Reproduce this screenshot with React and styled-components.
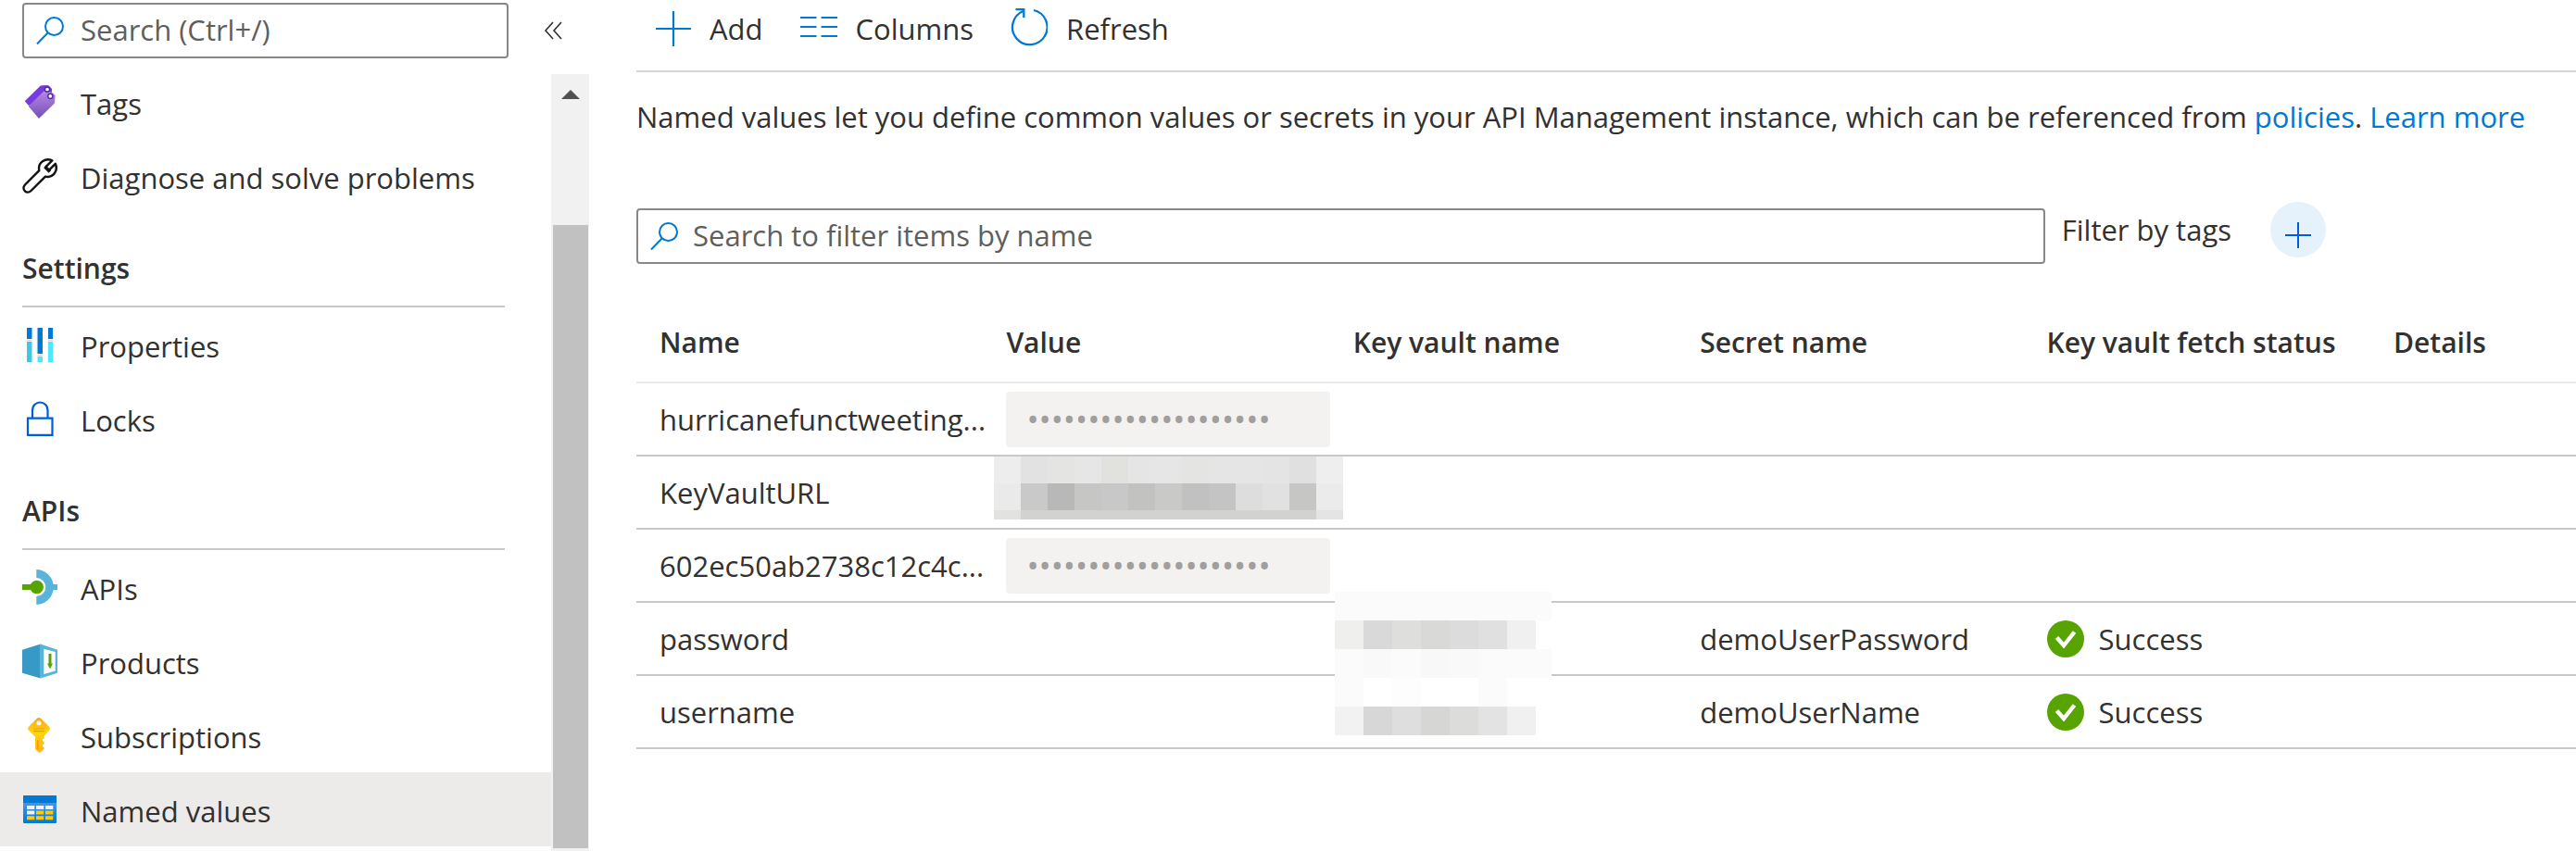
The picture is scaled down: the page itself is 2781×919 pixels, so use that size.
import React from "react";
import styled, { createGlobalStyle } from "styled-components";

const ink = "#323130";
const blue = "#0078d4";
const line = "#c8c8c8";

const GlobalStyle = createGlobalStyle`
  *, *::before, *::after { box-sizing: border-box; }
  body {
    margin: 0;
    background: #fff;
    color: ${ink};
    font-family: "Open Sans", "Noto Sans", sans-serif;
    font-size: 31px;
    line-height: 42px;
  }
  button, input { font: inherit; color: inherit; }
  svg { display: block; flex: none; }
`;

const Page = styled.div`
  display: flex;
  min-height: 100vh;
`;

/* Side navigation */

const Sidebar = styled.aside`
  display: flex;
  flex-direction: column;
  flex: none;
  width: 636px;
`;

const SidebarHeader = styled.div`
  display: flex;
  align-items: center;
  gap: 24px;
  padding: 3px 15px 7px 24px;
`;

const SearchBox = styled.label`
  display: flex;
  align-items: center;
  gap: ${(p) => p.$gap}px;
  flex: 1;
  min-width: 0;
  height: 60px;
  padding: 0 13px;
  border: 2px solid #8a8886;
  border-radius: 4px;
`;

const SearchInput = styled.input`
  flex: 1;
  min-width: 0;
  padding: 0 0 2px;
  border: 0;
  outline: 0;
  background: transparent;
  &::placeholder { color: #605e5c; opacity: 1; }
`;

const CollapseButton = styled.button`
  display: flex;
  align-items: center;
  justify-content: center;
  width: 48px;
  height: 60px;
  padding: 0;
  border: 0;
  background: none;
`;

const SidebarBody = styled.div`
  display: flex;
  flex: 1;
`;

const Nav = styled.nav`
  flex: 1;
`;

const NavHeading = styled.h2`
  margin: 0 50px 0 24px;
  padding-top: 20px;
  border-bottom: 2px solid ${line};
  font-size: 30px;
  font-weight: 600;
  line-height: 80px;
`;

const NavItem = styled.a`
  display: flex;
  align-items: center;
  gap: 25px;
  height: 80px;
  padding-left: 24px;
  background: ${(p) => (p.$active ? "#edebe9" : "transparent")};
  color: inherit;
  text-decoration: none;
`;

const NavLabel = styled.span`
  padding-top: 4px;
`;

const ScrollTrack = styled.div`
  display: flex;
  flex-direction: column;
  width: 41px;
  margin-top: 10px;
  padding: 0 1px 3px 2px;
  background: #f1f1f1;
`;

const ScrollArrow = styled.div`
  display: flex;
  align-items: center;
  justify-content: center;
  height: 44px;
`;

const ScrollThumb = styled.div`
  flex: 1;
  margin-top: 119px;
  background: #c1c1c1;
`;

/* Main content */

const Main = styled.main`
  flex: 1;
  min-width: 0;
  padding-left: 51px;
`;

const Toolbar = styled.div`
  display: flex;
  gap: 40px;
  height: 78px;
  padding: 0 0 14px 21px;
  border-bottom: 2px solid #d6d6d6;
`;

const ToolButton = styled.button`
  display: flex;
  align-items: center;
  gap: 20px;
  padding: 0;
  border: 0;
  background: none;
`;

const Intro = styled.p`
  margin: 27px 0 71px;
`;

const Link = styled.a`
  color: ${blue};
  text-decoration: none;
`;

const FilterRow = styled.div`
  display: flex;
  align-items: flex-start;
  padding-right: 270px;
`;

const FilterField = styled.div`
  display: flex;
  flex: 1;
  padding-top: 7px;
`;

const FilterLabel = styled.span`
  margin: 0 42px 0 18px;
  line-height: 60px;
`;

const AddTagButton = styled.button`
  display: flex;
  align-items: center;
  justify-content: center;
  width: 60px;
  height: 60px;
  padding: 12px 0 0;
  border: 0;
  border-radius: 50%;
  background: #e5f1fb;
`;

const Table = styled.table`
  width: 100%;
  margin-top: 43px;
  border-collapse: separate;
  border-spacing: 0;
  table-layout: fixed;
`;

const HeadCell = styled.th`
  width: ${(p) => (p.$last ? "222px" : "auto")};
  height: 86px;
  padding: 0 0 0 25px;
  border-bottom: 2px solid #eaeaea;
  font-size: 30px;
  font-weight: 600;
  text-align: left;
  white-space: nowrap;
`;

const Cell = styled.td`
  position: relative;
  height: 79px;
  padding: 0 0 0 ${(p) => (p.$flush ? 12 : 25)}px;
  border-bottom: 2px solid ${line};
  vertical-align: ${(p) => (p.$flush ? "top" : "middle")};
  white-space: nowrap;
`;

const Secret = styled.input`
  display: block;
  width: 350px;
  max-width: 100%;
  height: 60px;
  padding: 0 22px;
  border: 0;
  border-radius: 4px;
  background: #f3f2f1;
  color: #a19f9d;
  font-size: 35px;
`;

const Status = styled.span`
  display: flex;
  align-items: center;
  gap: 16px;
`;

const ValueMask = styled.div`
  display: grid;
  grid-template-columns: repeat(13, 29px);
  grid-template-rows: 29px 29px 10px;
`;

/* Covers the vault names of two rows, and the border between them */
const VaultMask = styled.div`
  position: absolute;
  z-index: 1;
  top: -12px;
  left: 5px;
  display: grid;
  grid-template-columns: repeat(7, 31px) 17px;
  grid-auto-rows: 31px;
`;

const MaskTile = styled.span`
  background: ${(p) => p.$tone};
`;

/* Icons */

const Icon = ({ size = 38, h = size, box = `0 0 ${size} ${h}`, children }) => (
  <svg width={size} height={h} viewBox={box} fill="none" aria-hidden="true">
    {children}
  </svg>
);

const SearchIcon = () => (
  <Icon size={30}>
    <g stroke={blue} strokeWidth="2">
      <circle cx="19.5" cy="10.5" r="9.5" />
      <path d="M12.8 17.2L1 29.5" />
    </g>
  </Icon>
);

const CollapseIcon = () => (
  <Icon size={20}>
    <path d="M10 1L2 10L10 19M19 1L11 10L19 19" stroke={ink} strokeWidth="1.6" />
  </Icon>
);

const TagsIcon = () => (
  <Icon>
    <defs>
      <linearGradient id="tag" x1="0" y1="0" x2="0" y2="1">
        <stop offset="0" stopColor="#b987e6" />
        <stop offset="1" stopColor="#7350b5" />
      </linearGradient>
    </defs>
    <path d="M2.7 18.3L19 2.2Q20 1.2 21.5 1.2L27 1Q28.300 1 29.200 2L32 5V12L7 23Z" fill="#773adc" />
    <path d="M6.700 23.700L23.500 7.200Q24.500 6.300 26 6.500L32.500 9L35.700 12L35 19.500Q35 20.500 34.200 21.200L18 37Z" fill="url(#tag)" />
    <circle cx="27" cy="5.500" r="2.600" fill="#fff" stroke="#4f2a9a" strokeWidth="1.500" />
    <circle cx="30.300" cy="12.800" r="2.600" fill="#fff" stroke="#552f99" strokeWidth="1.500" />
  </Icon>
);

const WrenchIcon = () => (
  <Icon>
    <path
      d="M32.300 2.300C25 -.800 16.500 4.500 18.300 13.200L3 28.500C-1.500 33.500 5 39.500 9.500 35L25 19.600C33.500 21.500 39 13.500 35.800 5.800L29 12.600L25.500 9.200Z"
      stroke="#111"
      strokeWidth="2.400"
      strokeLinejoin="round"
    />
    <path d="M26.500 8.200L24.600 10.200L28.600 14.200L30.500 12.200" stroke="#111" strokeWidth="2" />
  </Icon>
);

const PropertiesIcon = () => (
  <Icon>
    <path d="M5 1h5.500v12H5zM16.500 1H22v28h-5.500zM28 1h5v12h-5z" fill={blue} />
    <path d="M5 16h5.500v22H5z" fill="#3cc8e6" />
    <path d="M16.500 32H22v6h-5.500zM28 16h5v22h-5z" fill="#50e6ff" />
    <path d="M5 13.500h5.500v2H5zM16.500 29.500H22v2h-5.500zM28 13.500h5v2h-5z" fill="#d9d9d9" />
  </Icon>
);

const LockIcon = () => (
  <Icon>
    <g stroke="#015cda" strokeWidth="2.200">
      <path d="M6 18.600h26.500v18.300H6z" />
      <path d="M11 18V10.500C11 -1.500 27.500 -1.500 27.500 10.500V18" />
    </g>
  </Icon>
);

const ApiIcon = () => (
  <Icon>
    <path d="M15.300 0A19 18.900 0 0 1 33.600 16H38v6h-4.400A19 18.900 0 0 1 15.300 38V29A10 10 0 0 0 15.300 9Z" fill="#59b4d9" />
    <path d="M0 16h9a7.300 7.300 0 1 1 0 6H0z" fill="#57a300" />
  </Icon>
);

const ProductIcon = () => (
  <Icon>
    <path d="M19.700 .5L38 6.700V31.700L19.700 37.500Z" fill="#59b4d9" />
    <path d="M0 6.700L19.700 .5V37.500L0 31.700Z" fill="#3999c6" />
    <path d="M23.300 5.700L35.700 9V29.500L23.300 33Z" fill="#fff" />
    <path d="M28.500 11h3v10.500H33L30 27.500L27 21.500H28.500Z" fill="#57a300" />
  </Icon>
);

const KeyIcon = () => (
  <Icon>
    <defs>
      <linearGradient id="key" x1="0" y1="0" x2="0" y2="1">
        <stop offset="0" stopColor="#fea11b" />
        <stop offset=".4" stopColor="#ffd70f" />
        <stop offset="1" stopColor="#feb21b" />
      </linearGradient>
    </defs>
    <path
      d="M15.500 1.200Q18 -1 20.500 1.200L29 9.700Q31 12 29 14.200L23.600 20V23H22v2.500h1.600V29H22v2.500h1.600V34L18.500 38L14 34V20.500L7 13.900Q5 12 7 9.700Z"
      fill="url(#key)"
    />
    <circle cx="18" cy="5.700" r="2.500" fill="#fff" />
    <path d="M12 12h12M12 14.700h12M16.700 24v10" stroke="#ff9300" strokeWidth="1.200" />
  </Icon>
);

const TableIcon = () => (
  <Icon>
    <defs>
      <linearGradient id="grid" x1="0" y1="0" x2="0" y2="1">
        <stop offset="0" stopColor="#5ea0ef" />
        <stop offset="1" stopColor={blue} />
      </linearGradient>
    </defs>
    <rect x="1" y="4" width="36" height="30" rx="1" fill="url(#grid)" />
    <path d="M1 5q0-1 1-1h34q1 0 1 1v7H1z" fill={blue} />
    <path d="M5 15h8.300v4H5zM15 15h8.300v4H15zM25 15h8.300v4H25zM5 20.600h8.300v4H5z" fill="#f2f2f2" />
    <path d="M15 20.600h8.300v4H15zM25 20.600h8.300v4H25zM5 26.200h8.300v4H5zM15 26.200h8.300v4H15zM25 26.200h8.300v4H25z" fill="#ffca00" />
  </Icon>
);

const AddIcon = () => (
  <Icon>
    <path d="M19 0v38M0 19h38" stroke={blue} strokeWidth="2.200" />
  </Icon>
);

const ColumnsIcon = () => (
  <Icon size={40}>
    <path d="M0 8h17.500M22.500 8H40M0 18h17.500M22.500 18H40M0 28h17.500M22.500 28H40" stroke={blue} strokeWidth="2.200" />
  </Icon>
);

const RefreshIcon = () => (
  <Icon size={40} h={44}>
    <g stroke={blue} strokeWidth="2.300">
      <path d="M25 2A18.800 18.800 0 1 1 13.500 3" />
      <path d="M5.500 1.200H14.300V10" />
    </g>
  </Icon>
);

const TagPlusIcon = () => (
  <Icon size={28}>
    <path d="M14 0v28M0 14h28" stroke="#015cda" strokeWidth="2" />
  </Icon>
);

const SuccessIcon = () => (
  <Icon size={40}>
    <circle cx="20" cy="20" r="20" fill="#57a300" />
    <path d="M10.500 18.500L18 27L29.500 12.500" stroke="#fff" strokeWidth="4.400" />
  </Icon>
);

/* Data */

const generalItems = [
  { label: "Tags", Glyph: TagsIcon },
  { label: "Diagnose and solve problems", Glyph: WrenchIcon },
];

const settingsItems = [
  { label: "Properties", Glyph: PropertiesIcon },
  { label: "Locks", Glyph: LockIcon },
];

const apiItems = [
  { label: "APIs", Glyph: ApiIcon },
  { label: "Products", Glyph: ProductIcon },
  { label: "Subscriptions", Glyph: KeyIcon },
  { label: "Named values", Glyph: TableIcon, active: true },
];

const columns = ["Name", "Value", "Key vault name", "Secret name", "Key vault fetch status", "Details"];

const rows = [
  { name: "hurricanefunctweeting...", value: "secret" },
  { name: "KeyVaultURL", value: "masked" },
  { name: "602ec50ab2738c12c4c...", value: "secret" },
  { name: "password", vault: true, secretName: "demoUserPassword", status: "Success" },
  { name: "username", secretName: "demoUserName", status: "Success" },
];

const valueTones = [
  "#ededed", "#e2e2e2", "#e4e4e2", "#e6e6e6", "#e1e1de", "#e5e5e5", "#e6e6e6", "#e4e4e2", "#e5e5e5", "#e5e5e5", "#e4e4e4", "#e0e0e0", "#eeeeee",
  "#eaeaea", "#c9c9c9", "#b8b8b8", "#c6c6c4", "#c8c8c8", "#c2c2c0", "#c9c9c7", "#c1c1c1", "#c4c4c4", "#dddddd", "#e1e1e1", "#c6c6c4", "#ebebeb",
  "#e2e2e1", ...Array(11).fill("#d2d2d0"), "#e4e4e4",
];

const vaultTones = [
  ...Array(8).fill("#fbfbfb"),
  "#efefed", "#d9d9d9", "#dededc", "#d9d9d7", "#dcdcdc", "#e0e0e0", "#f0f0f0", "#ffffff",
  "#fbfbfb", "#f9f9f9", "#fbfbfb", "#f8f8f8", "#f9f9f9", "#fbfbfb", "#fbfbfb", "#fbfbfb",
  "#fbfbfb", "#ffffff", "#fdfdfd", "#ffffff", "#ffffff", "#fbfbfb", "#ffffff", "#ffffff",
  "#f2f2f2", "#d7d7d7", "#dedede", "#d6d6d4", "#dcdcda", "#e3e3e3", "#f0f0f0", "#ffffff",
];

const tiles = (tones) => tones.map((tone, i) => <MaskTile key={i} $tone={tone} />);

const NavList = ({ items }) =>
  items.map(({ label, Glyph, active }) => (
    <NavItem key={label} href="#" $active={active} aria-current={active ? "page" : undefined}>
      <Glyph />
      <NavLabel>{label}</NavLabel>
    </NavItem>
  ));

export default function App() {
  return (
    <>
      <GlobalStyle />
      <Page>
        <Sidebar>
          <SidebarHeader>
            <SearchBox $gap={18}>
              <SearchIcon />
              <SearchInput type="text" placeholder="Search (Ctrl+/)" aria-label="Search (Ctrl+/)" />
            </SearchBox>
            <CollapseButton type="button" aria-label="Collapse menu">
              <CollapseIcon />
            </CollapseButton>
          </SidebarHeader>
          <SidebarBody>
            <Nav>
              <NavList items={generalItems} />
              <NavHeading>Settings</NavHeading>
              <NavList items={settingsItems} />
              <NavHeading>APIs</NavHeading>
              <NavList items={apiItems} />
            </Nav>
            <ScrollTrack aria-hidden="true">
              <ScrollArrow>
                <Icon size={20} h={10}>
                  <path d="M0 10L10 0L20 10Z" fill="#505050" />
                </Icon>
              </ScrollArrow>
              <ScrollThumb />
            </ScrollTrack>
          </SidebarBody>
        </Sidebar>

        <Main>
          <Toolbar>
            <ToolButton type="button"><AddIcon />Add</ToolButton>
            <ToolButton type="button"><ColumnsIcon />Columns</ToolButton>
            <ToolButton type="button"><RefreshIcon />Refresh</ToolButton>
          </Toolbar>

          <Intro>
            Named values let you define common values or secrets in your API Management instance, which can be
            referenced from <Link href="#">policies</Link>. <Link href="#">Learn more</Link>
          </Intro>

          <FilterRow>
            <FilterField>
              <SearchBox $gap={16}>
                <SearchIcon />
                <SearchInput
                  type="text"
                  placeholder="Search to filter items by name"
                  aria-label="Search to filter items by name"
                />
              </SearchBox>
            </FilterField>
            <FilterLabel>Filter by tags</FilterLabel>
            <AddTagButton type="button" aria-label="Add tag filter">
              <TagPlusIcon />
            </AddTagButton>
          </FilterRow>

          <Table>
            <thead>
              <tr>
                {columns.map((column) => (
                  <HeadCell key={column} scope="col" $last={column === "Details"}>{column}</HeadCell>
                ))}
              </tr>
            </thead>
            <tbody>
              {rows.map((row) => (
                <tr key={row.name}>
                  <Cell>{row.name}</Cell>
                  <Cell $flush={row.value === "masked"}>
                    {row.value === "secret" && (
                      <Secret type="text" readOnly value={"•".repeat(20)} aria-label={`Value of ${row.name}`} />
                    )}
                    {row.value === "masked" && <ValueMask>{tiles(valueTones)}</ValueMask>}
                  </Cell>
                  <Cell>{row.vault && <VaultMask>{tiles(vaultTones)}</VaultMask>}</Cell>
                  <Cell>{row.secretName}</Cell>
                  <Cell>
                    {row.status && (
                      <Status>
                        <SuccessIcon />
                        {row.status}
                      </Status>
                    )}
                  </Cell>
                  <Cell />
                </tr>
              ))}
            </tbody>
          </Table>
        </Main>
      </Page>
    </>
  );
}
